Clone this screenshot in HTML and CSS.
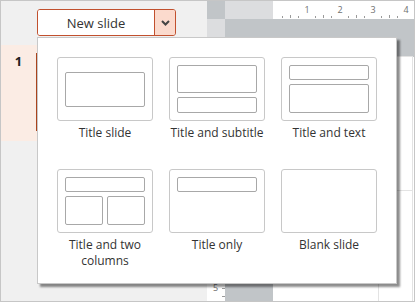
FILE: index.html
```html
<!DOCTYPE html>
<html lang="en">
<head>
    <meta charset="UTF-8">
    <meta name="viewport" content="width=device-width, initial-scale=1.0">
    <title>Impress - New slide</title>
    <link rel="stylesheet" href="styles.css">
</head>
<body>
    <div class="app">
        <aside class="slides-pane">
            <div class="pane-head">
                <div class="split-button">
                    <button class="split-main">New slide</button>
                    <button class="split-arrow" aria-label="Choose layout">
                        <svg width="9" height="6" viewBox="0 0 9 6">
                            <path d="M1 1 L4.5 4.5 L8 1" fill="none" stroke="#444" stroke-width="2"/>
                        </svg>
                    </button>
                </div>
            </div>
            <div class="slide-item">
                <span class="slide-num">1</span>
                <div class="slide-thumb"></div>
            </div>
        </aside>

        <main class="workspace">
            <div class="ruler-corner"></div>
            <div class="ruler-h">
                <div class="ruler-h-page">
                    <svg width="141" height="18" viewBox="0 0 141 18">
                        <g stroke="#9a9a9a" stroke-width="1">
                            <line x1="9.5" y1="15" x2="9.5" y2="17"/>
                            <line x1="17.5" y1="14" x2="17.5" y2="17"/>
                            <line x1="25.5" y1="15" x2="25.5" y2="17"/>
                            <line x1="42.5" y1="15" x2="42.5" y2="17"/>
                            <line x1="50.5" y1="14" x2="50.5" y2="17"/>
                            <line x1="58.5" y1="15" x2="58.5" y2="17"/>
                            <line x1="75.5" y1="15" x2="75.5" y2="17"/>
                            <line x1="83.5" y1="14" x2="83.5" y2="17"/>
                            <line x1="91.5" y1="15" x2="91.5" y2="17"/>
                            <line x1="108.5" y1="15" x2="108.5" y2="17"/>
                            <line x1="116.5" y1="14" x2="116.5" y2="17"/>
                            <line x1="124.5" y1="15" x2="124.5" y2="17"/>
                        </g>
                        <g class="ruler-num" text-anchor="middle">
                            <text x="34" y="12">1</text>
                            <text x="67" y="12">2</text>
                            <text x="100" y="12">3</text>
                            <text x="133" y="12">4</text>
                        </g>
                    </svg>
                </div>
            </div>
            <div class="ruler-v">
                <div class="ruler-v-page">
                    <svg width="18" height="245" viewBox="0 0 18 245">
                        <g stroke="#9a9a9a" stroke-width="1">
                            <line x1="15" y1="231.5" x2="18" y2="231.5"/>
                            <line x1="15" y1="239.5" x2="18" y2="239.5"/>
                        </g>
                        <text class="ruler-num" x="6" y="234">5</text>
                    </svg>
                </div>
            </div>
            <div class="canvas">
                <div class="slide">
                    <div class="slide-ph slide-ph-title"></div>
                    <div class="slide-ph slide-ph-body"></div>
                </div>
            </div>
        </main>
    </div>

    <!-- layout picker dropdown -->
    <div class="layout-menu">
        <div class="layout-grid">
            <div class="layout-option">
                <div class="layout-card">
                    <span class="ph ph-center"></span>
                </div>
                <div class="layout-label">Title slide</div>
            </div>
            <div class="layout-option">
                <div class="layout-card rows-big-small">
                    <span class="ph"></span>
                    <span class="ph"></span>
                </div>
                <div class="layout-label">Title and subtitle</div>
            </div>
            <div class="layout-option">
                <div class="layout-card rows-small-big">
                    <span class="ph"></span>
                    <span class="ph"></span>
                </div>
                <div class="layout-label">Title and text</div>
            </div>
            <div class="layout-option">
                <div class="layout-card two-cols">
                    <span class="ph ph-wide"></span>
                    <span class="ph"></span>
                    <span class="ph"></span>
                </div>
                <div class="layout-label">Title and two columns</div>
            </div>
            <div class="layout-option">
                <div class="layout-card rows-small-big">
                    <span class="ph"></span>
                </div>
                <div class="layout-label">Title only</div>
            </div>
            <div class="layout-option">
                <div class="layout-card"></div>
                <div class="layout-label">Blank slide</div>
            </div>
        </div>
    </div>
</body>
</html>
```

FILE: styles.css
```css
* {
    margin: 0;
    padding: 0;
    box-sizing: border-box;
}

body {
    font-family: "Segoe UI", "Open Sans", "Noto Sans", sans-serif;
    width: 415px;
    height: 302px;
    border: 1px solid #c6c6c6;
    background: #f0f0f0;
    position: relative;
    overflow: hidden;
    color: #333;
}

.app {
    display: flex;
    height: 100%;
}

/* slide sorter */
.slides-pane {
    width: 206px;
    flex-shrink: 0;
    background: #f0f0f0;
}

.pane-head {
    height: 44px;
    padding: 8px 0 0 36px;
}

.split-button {
    display: flex;
    width: 139px;
    height: 27px;
    border: 1px solid #c1502e;
    border-radius: 3px;
    overflow: hidden;
}

.split-main {
    flex: 1;
    border: none;
    background: #fff;
    font-family: inherit;
    font-size: 13px;
    color: #333;
}

.split-arrow {
    width: 21px;
    border: none;
    border-left: 1px solid #c1502e;
    background: #fbdacd;
    display: flex;
    align-items: center;
    justify-content: center;
}

.slide-item {
    height: 96px;
    background: #fbece4;
    display: flex;
    align-items: flex-start;
    padding-top: 8px;
}

.slide-num {
    width: 35px;
    text-align: center;
    font-size: 13px;
    font-weight: 700;
    line-height: 16px;
    color: #222;
}

.slide-thumb {
    width: 140px;
    height: 78px;
    background: #fff;
    border: 1px solid #a9431c;
}

/* editing area */
.workspace {
    flex: 1;
    display: grid;
    grid-template-columns: 18px 1fr;
    grid-template-rows: 18px 1fr;
}

.ruler-corner {
    background: #c1c5c8;
}

.ruler-h {
    background: #dcdddf;
    padding-left: 48px;
}

.ruler-h-page,
.ruler-v-page {
    background: #fff;
    height: 100%;
}

.ruler-v {
    background: #dcdddf;
    padding-top: 38px;
}

.ruler-h svg,
.ruler-v svg {
    display: block;
}

.ruler-num {
    font-size: 9px;
    fill: #707070;
    font-family: "Segoe UI", "Open Sans", sans-serif;
}

.canvas {
    background: #c1c5c8;
    padding: 38px 0 0 48px;
    overflow: hidden;
}

.slide {
    height: 100%;
    background: #fff;
    position: relative;
}

/* placeholder outlines on the slide itself */
.slide-ph {
    position: absolute;
    border: 1px solid #e3e3e3;
}

.slide-ph-title {
    left: 20px;
    top: -1px;
    width: 120px;
    height: 135px;
}

.slide-ph-body {
    left: 105px;
    top: 133px;
    width: 35px;
    height: 200px;
}

/* layout dropdown */
.layout-menu {
    position: absolute;
    left: 36px;
    top: 36px;
    width: 360px;
    background: #fff;
    border: 1px solid #c8c8c8;
    box-shadow: 3px 3px 2px rgba(0, 0, 0, 0.45);
    padding: 19px 19px 14px;
}

.layout-grid {
    display: grid;
    grid-template-columns: repeat(3, 96px);
    column-gap: 16px;
    row-gap: 28px;
}

.layout-card {
    width: 96px;
    height: 64px;
    border: 1px solid #c8c8c8;
    border-radius: 3px;
    padding: 7px;
    display: grid;
    gap: 4px;
}

.ph {
    border: 1px solid #a8a8a8;
    border-radius: 2px;
}

.ph-center {
    height: 35px;
    align-self: center;
}

.rows-big-small {
    grid-template-rows: 28px 1fr;
}

.rows-small-big {
    grid-template-rows: 15px 1fr;
}

.two-cols {
    grid-template-columns: 1fr 1fr;
    grid-template-rows: 15px 1fr;
}

.ph-wide {
    grid-column: 1 / 3;
}

.layout-label {
    margin-top: 4px;
    font-size: 12px;
    line-height: 16px;
    text-align: center;
    color: #333;
}
```
